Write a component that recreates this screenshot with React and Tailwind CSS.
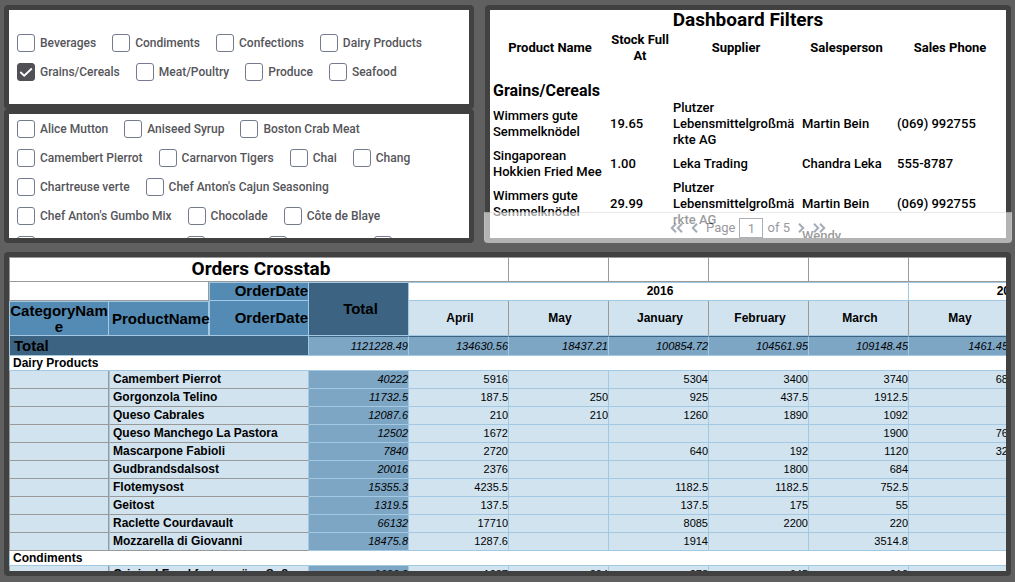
import { useState } from "react";

const CATEGORIES = ["Beverages", "Condiments", "Confections", "Dairy Products", "Grains/Cereals", "Meat/Poultry", "Produce", "Seafood"];

const PRODUCTS = [
  "Alice Mutton", "Aniseed Syrup", "Boston Crab Meat", "Camembert Pierrot", "Carnarvon Tigers", "Chai", "Chang",
  "Chartreuse verte", "Chef Anton's Cajun Seasoning", "Chef Anton's Gumbo Mix", "Chocolade", "Côte de Blaye",
  "Escargots de Bourgogne", "Filo Mix", "Flotemysost", "Geitost",
];

const STOCK = [
  ["Wimmers gute Semmelknödel", "19.65", "Plutzer\nLebensmittelgroßmä\nrkte AG", "Martin Bein", "(069) 992755"],
  ["Singaporean Hokkien Fried Mee", "1.00", "Leka Trading", "Chandra Leka", "555-8787"],
  ["Wimmers gute Semmelknödel", "29.99", "Plutzer\nLebensmittelgroßmä\nrkte AG", "Martin Bein", "(069) 992755"],
  ["Tunnbröd", "9.00", "PB Knäckebröd", "Wendy\nMackenzie", "031-987 65 43"],
];

const MONTHS = ["April", "May", "January", "February", "March", "May", "April"];
const TOTALS = ["1121228.49", "134630.56", "18437.21", "100854.72", "104561.95", "109148.45", "1461.45", ""];

const GROUPS = [
  {
    name: "Dairy Products",
    rows: [
      ["Camembert Pierrot", "40222", "5916", "", "5304", "3400", "3740", "68", ""],
      ["Gorgonzola Telino", "11732.5", "187.5", "250", "925", "437.5", "1912.5", "", ""],
      ["Queso Cabrales", "12087.6", "210", "210", "1260", "1890", "1092", "", ""],
      ["Queso Manchego La Pastora", "12502", "1672", "", "", "", "1900", "76", ""],
      ["Mascarpone Fabioli", "7840", "2720", "", "640", "192", "1120", "32", ""],
      ["Gudbrandsdalsost", "20016", "2376", "", "", "1800", "684", "", ""],
      ["Flotemysost", "15355.3", "4235.5", "", "1182.5", "1182.5", "752.5", "", ""],
      ["Geitost", "1319.5", "137.5", "", "137.5", "175", "55", "", ""],
      ["Raclette Courdavault", "66132", "17710", "", "8085", "2200", "220", "", ""],
      ["Mozzarella di Giovanni", "18475.8", "1287.6", "", "1914", "", "3514.8", "", ""],
    ],
  },
  {
    name: "Condiments",
    rows: [["Original Frankfurter grüne Soße", "9680.2", "1287", "204", "273", "645", "210", "", ""]],
  },
];

function Panel({ className = "", children }) {
  return (
    <section className={`min-h-0 min-w-0 overflow-hidden rounded-[4px] border-[5px] border-[#414141] bg-white ${className}`}>
      {children}
    </section>
  );
}

function CheckList({ items, initial = [], label }) {
  const [picked, setPicked] = useState(initial);
  const toggle = (item) =>
    setPicked(picked.includes(item) ? picked.filter((p) => p !== item) : [...picked, item]);

  return (
    <fieldset aria-label={label} className="flex flex-wrap gap-x-4 gap-y-[11px] px-2">
      {items.map((item) => (
        <label key={item} className="flex h-[18px] items-center gap-[5px] text-[12px] font-medium text-[#55555a]">
          <span className="grid">
            <input
              type="checkbox"
              checked={picked.includes(item)}
              onChange={() => toggle(item)}
              className="peer col-start-1 row-start-1 size-[18px] appearance-none rounded-[3px] border border-[#747b8d] bg-white checked:border-[#505055] checked:bg-[#505055]"
            />
            <svg viewBox="0 0 18 18" className="pointer-events-none invisible col-start-1 row-start-1 size-[18px] peer-checked:visible">
              <path d="M3.3 9l3.9 3.7 7.6-7.2" fill="none" stroke="#fff" strokeWidth="1.8" />
            </svg>
          </span>
          {item}
        </label>
      ))}
    </fieldset>
  );
}

function Arrow({ double, flip, label }) {
  return (
    <button type="button" aria-label={label} className="text-[#6c7488]">
      <svg viewBox={double ? "0 0 13 10" : "0 0 7 10"} className={`h-[10px] ${double ? "w-[13px]" : "w-[7px]"} ${flip ? "-scale-x-100" : ""}`}>
        <path d={double ? "M1 .8L5.2 5 1 9.2M7 .8L11.2 5 7 9.2" : "M1 .8L5.2 5 1 9.2"} fill="none" stroke="currentColor" strokeWidth="2" />
      </svg>
    </button>
  );
}

function Pager() {
  const [page, setPage] = useState("1");
  return (
    <nav className="absolute -inset-x-px bottom-0 h-[31px] rounded-b-[4px] border-t border-[#ddd] bg-white opacity-60">
      <div className="flex h-full items-center justify-center text-[13px] text-[#55555f]">
        <Arrow double flip label="First page" />
        <span className="w-2" />
        <Arrow flip label="Previous page" />
        <label htmlFor="page" className="pr-1 pl-2">Page</label>
        <input
          id="page"
          value={page}
          onChange={(e) => setPage(e.target.value)}
          className="h-5 w-6 border border-[#747b8d] text-center"
        />
        <span className="pr-2 pl-1">of 5</span>
        <Arrow label="Next page" />
        <span className="w-2" />
        <Arrow double label="Last page" />
      </div>
    </nav>
  );
}

function StockReport() {
  return (
    <table className="w-full table-fixed text-left text-[13px] leading-4 font-medium text-black">
      <caption className="h-5 text-[19px] leading-5 font-bold">Dashboard Filters</caption>
      <colgroup>
        <col className="w-[117px]" />
        <col className="w-[63px]" />
        <col className="w-[129px]" />
        <col className="w-[95px]" />
        <col className="w-[112px]" />
      </colgroup>
      <thead>
        <tr className="h-9 text-center font-bold">
          <th className="pl-[3px]">Product Name</th>
          <th className="pl-[3px]">Stock Full At</th>
          <th className="pl-[3px]">Supplier</th>
          <th>Salesperson</th>
          <th>Sales Phone</th>
        </tr>
      </thead>
      <tbody>
        <tr>
          <th colSpan={5} className="h-[34px] px-[3px] pb-px align-bottom text-[16px] font-bold">Grains/Cereals</th>
        </tr>
        {STOCK.map((row, i) => (
          <tr key={i}>
            {row.map((cell, j) => (
              <td key={j} className="pl-[3px] whitespace-pre-line">{cell}</td>
            ))}
          </tr>
        ))}
      </tbody>
    </table>
  );
}

function Crosstab() {
  return (
    <table className="w-[1100px] table-fixed border-separate border-spacing-0 font-['Liberation_Sans',Arial,sans-serif] text-[11px] leading-[14px] text-black">
      <colgroup>
        {Array.from({ length: 11 }, (_, i) => (
          <col key={i} className="w-[100px]" />
        ))}
      </colgroup>
      <thead>
        <tr className="h-[25px]">
          <th colSpan={5} className="border border-[#999] pb-px pl-1 font-[Roboto,sans-serif] text-[19px] leading-5 font-bold">Orders Crosstab</th>
          {[0, 1, 2, 3, 4, 5].map((i) => (
            <td key={i} className="border-y border-r border-[#999]" />
          ))}
        </tr>
        <tr className="h-[19px] text-[15px] leading-4">
          <td colSpan={2} className="border-x border-b border-[#999]" />
          <th className="border border-[#a3c8e3] bg-[#538bb4] pb-px text-right">OrderDate</th>
          <th rowSpan={2} className="border-y border-r border-[#a3c8e3] bg-[#3c6382] pb-px pl-1">Total</th>
          <th colSpan={5} className="border-y border-r border-[#a3c8e3] pb-px pl-[3px] text-[12px]">2016</th>
          <th colSpan={2} className="border-y border-r border-[#a3c8e3] pb-px pl-[3px] text-[12px]">2017</th>
        </tr>
        <tr className="h-[35px] text-[15px] leading-4">
          <th className="border border-[#a3c8e3] bg-[#538bb4] break-words">CategoryName</th>
          <th className="border-y border-r border-[#a3c8e3] bg-[#538bb4] pl-[3px]">ProductName</th>
          <th className="border-x border-b border-[#a3c8e3] bg-[#538bb4] text-right">OrderDate</th>
          {MONTHS.map((month, i) => (
            <th key={i} className="border-r border-b border-r-[#999] border-b-[#a3c8e3] bg-[#d1e3ef] pl-[3px] text-[12px]">{month}</th>
          ))}
        </tr>
      </thead>
      <tbody>
        <tr className="h-5">
          <th colSpan={3} className="border-x border-b border-[#a3c8e3] bg-[#3c6382] pl-1 text-left text-[15px] leading-[18px]">Total</th>
          {TOTALS.map((total, i) => (
            <td key={i} className="border-t border-r border-b border-[#a3c8e3] border-t-[#3c6382] bg-[#7da5c4] text-right italic">{total}</td>
          ))}
        </tr>
      </tbody>
      {GROUPS.map((group) => (
        <tbody key={group.name}>
          <tr className="h-[15px]">
            <th colSpan={11} className="border-b border-l border-[#a3c8e3] pl-[3px] text-left text-[12px]">{group.name}</th>
          </tr>
          {group.rows.map(([name, total, ...values]) => (
            <tr key={name} className="h-[18px]">
              <td className="border-x border-b border-[#999] bg-[#d1e3ef]" />
              <th colSpan={2} className="border-x border-b border-[#a3c8e3] border-b-[#999] bg-[#d1e3ef] pb-px pl-[3px] text-left text-[12px] whitespace-nowrap">{name}</th>
              <td className="border-r border-b border-[#a3c8e3] bg-[#7da5c4] pb-px text-right italic">{total}</td>
              {values.map((value, i) => (
                <td key={i} className="border-r border-b border-[#a3c8e3] bg-[#d1e3ef] pb-px text-right">{value}</td>
              ))}
            </tr>
          ))}
        </tbody>
      ))}
    </table>
  );
}

export default function App() {
  return (
    <main className="grid h-screen grid-rows-[238fr_324fr] gap-[9px] bg-[#606060] px-1 pt-[5px] pb-[6px] font-[Roboto,sans-serif]">
      <div className="grid min-h-0 grid-cols-[470fr_526fr] gap-[11px]">
        <div className="grid min-h-0 min-w-0 grid-rows-[104fr_134fr]">
          <Panel className="pt-6">
            <CheckList label="Categories" items={CATEGORIES} initial={["Grains/Cereals"]} />
          </Panel>
          <Panel className="pt-[6px]">
            <CheckList label="Products" items={PRODUCTS} />
          </Panel>
        </div>
        <div className="relative grid min-h-0 min-w-0">
          <Panel>
            <StockReport />
          </Panel>
          <Pager />
        </div>
      </div>
      <Panel>
        <Crosstab />
      </Panel>
    </main>
  );
}
